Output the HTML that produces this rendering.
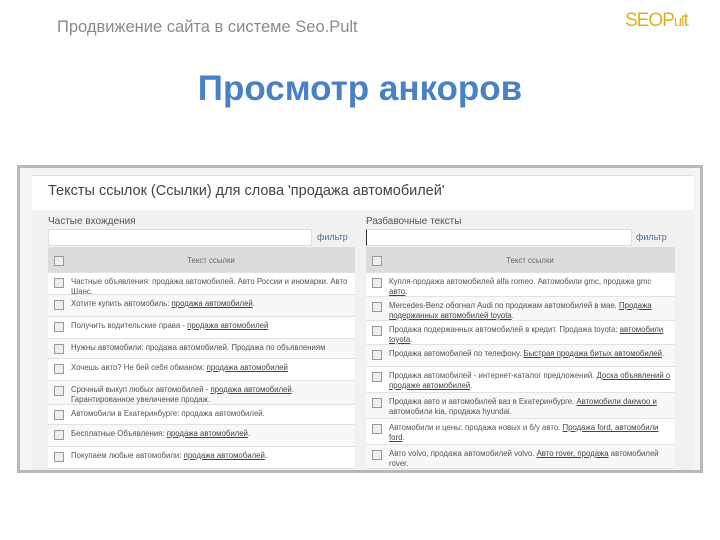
<!DOCTYPE html>
<html><head><meta charset="utf-8"><style>
body{margin:0;width:720px;height:540px;background:#fff;position:relative;overflow:hidden;font-family:"Liberation Sans",sans-serif}
.a{position:absolute}
.hd{left:57px;top:18px;font-size:16.5px;color:#8a8a8a}
.logo{left:625px;top:10px;font-size:19px;color:#e0b020;letter-spacing:-1px}
.ttl{left:0;width:720px;top:69px;text-align:center;font-size:35px;font-weight:bold;color:#4a80c4}
.frame{left:17px;top:165px;width:680px;height:302px;border:3px solid #b8b8b8;background:#f4f4f4;overflow:hidden}
.inner{left:12px;top:7px;width:662px;height:300px;background:#f1f1f1;border-top:1px solid #e0e0e0}
.h1{left:16px;top:7px;font-size:14.5px;color:#444}
.hbar{left:0;top:0;width:662px;height:34px;background:#fff}
.lbl{font-size:10px;color:#555;top:40px}
.inp{top:53px;height:15px;background:#fff;border:1px solid #ddd}
.flt{top:56px;font-size:9px;color:#4a6ea0}
.tbl{top:71px;width:307px;background:#fff}
.row{border-bottom:1px solid #e2e2e2;position:relative;font-size:7.8px;color:#555;line-height:10px;box-sizing:border-box;padding:4px 4px 0 23px;overflow:hidden}
.row.h{background:#dcdcdc;text-align:center;color:#666;padding-top:9px}
.row:nth-child(odd):not(.h){background:#f8f8f8}
.cb{position:absolute;left:6px;top:5px;width:8px;height:8px;border:1px solid #999;background:#eee}
u{color:#444}
</style></head><body>
<div class="a hd">Продвижение сайта в системе Seo.Pult</div>
<div class="a logo">SEOP<span style="font-size:15px">ul</span>t</div>
<div class="a ttl">Просмотр анкоров</div>
<div class="a frame">
<div class="a inner">
<div class="a hbar"></div>
<div class="a h1">Тексты ссылок (Ссылки) для слова 'продажа автомобилей'</div>
<div class="a lbl" style="left:16px">Частые вхождения</div>
<div class="a lbl" style="left:334px">Разбавочные тексты</div>
<div class="a inp" style="left:16px;width:262px"></div>
<div class="a flt" style="left:285px">фильтр</div>
<div class="a inp" style="left:334px;width:264px;border-left:1px solid #333"></div>
<div class="a flt" style="left:604px">фильтр</div>
<div class="a tbl" style="left:16px">
<div class="row h" style="height:26px"><span class="cb" style="top:9px"></span>Текст ссылки</div>
<div class="row" style="height:22px"><span class="cb"></span>Частные объявления: продажа автомобилей. Авто России и иномарки. Авто Шанс.</div>
<div class="row" style="height:22px"><span class="cb"></span>Хотите купить автомобиль: <u>продажа автомобилей</u>.</div>
<div class="row" style="height:22px"><span class="cb"></span>Получить водительские права - <u>продажа автомобилей</u></div>
<div class="row" style="height:20px"><span class="cb"></span>Нужны автомобили: продажа автомобилей. Продажа по объявлениям</div>
<div class="row" style="height:22px"><span class="cb"></span>Хочешь авто? Не бей себя обманом: <u>продажа автомобилей</u></div>
<div class="row" style="height:24px"><span class="cb"></span>Срочный выкуп любых автомобилей - <u>продажа автомобилей</u>. Гарантированное увеличение продаж.</div>
<div class="row" style="height:20px"><span class="cb"></span>Автомобили в Екатеринбурге: продажа автомобилей.</div>
<div class="row" style="height:22px"><span class="cb"></span>Бесплатные Объявления: <u>продажа автомобилей</u>.</div>
<div class="row" style="height:22px"><span class="cb"></span>Покупаем любые автомобили: <u>продажа автомобилей</u>.</div>
</div>
<div class="a tbl" style="left:334px;width:309px">
<div class="row h" style="height:26px"><span class="cb" style="top:9px"></span>Текст ссылки</div>
<div class="row" style="height:24px"><span class="cb"></span>Купля-продажа автомобилей alfa romeo. Автомобили gmc, продажа gmc <u>авто</u>.</div>
<div class="row" style="height:24px"><span class="cb"></span>Mercedes-Benz обогнал Audi по продажам автомобилей в мае. <u>Продажа подержанных автомобилей toyota</u>.</div>
<div class="row" style="height:24px"><span class="cb"></span>Продажа подержанных автомобилей в кредит. Продажа toyota: <u>автомобили toyota</u>.</div>
<div class="row" style="height:22px"><span class="cb"></span>Продажа автомобилей по телефону. <u>Быстрая продажа битых автомобилей</u>.</div>
<div class="row" style="height:26px"><span class="cb"></span>Продажа автомобилей - интернет-каталог предложений. <u>Доска объявлений о продаже автомобилей</u>.</div>
<div class="row" style="height:26px"><span class="cb"></span>Продажа авто и автомобилей ваз в Екатеринбурге. <u>Автомобили daewoo и</u> автомобили kia, продажа hyundai.</div>
<div class="row" style="height:26px"><span class="cb"></span>Автомобили и цены: продажа новых и б/у авто. <u>Продажа ford, автомобили ford</u>.</div>
<div class="row" style="height:24px"><span class="cb"></span>Авто volvo, продажа автомобилей volvo. <u>Авто rover, продажа</u> автомобилей rover.</div>
</div>
</div>
</div>
</body></html>
